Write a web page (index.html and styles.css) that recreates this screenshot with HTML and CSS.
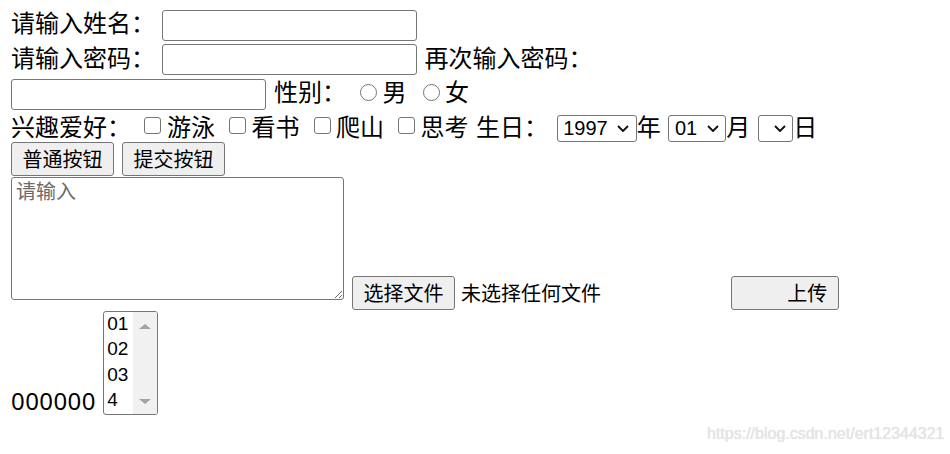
FILE: index.html
```html
<!DOCTYPE html>
<html lang="zh-CN">
<head>
<meta charset="utf-8">
<title>表单</title>
<link rel="stylesheet" href="styles.css">
</head>
<body>
<form class="form">
  <div class="row r1">
    <span class="lbl">请输入姓名：</span>
    <input class="txt ml7" type="text">
  </div>
  <div class="row r2">
    <span class="lbl">请输入密码：</span>
    <input class="txt ml7" type="password">
    <span class="lbl ml-again">再次输入密码：</span>
  </div>
  <div class="row r3">
    <input class="txt" type="password">
    <span class="lbl ml-sex">性别：</span>
    <span class="radio ml-r1"></span>
    <span class="lbl ml-opt">男</span>
    <span class="radio ml-r2"></span>
    <span class="lbl ml-opt">女</span>
  </div>
  <div class="row r4">
    <span class="lbl">兴趣爱好：</span>
    <span class="check ml-c1"></span>
    <span class="lbl ml-copt1">游泳</span>
    <span class="check ml-c"></span>
    <span class="lbl ml-copt">看书</span>
    <span class="check ml-c"></span>
    <span class="lbl ml-copt">爬山</span>
    <span class="check ml-c"></span>
    <span class="lbl ml-copt">思考</span>
    <span class="lbl ml-birth">生日：</span>
    <div class="sel sel-year ml-sel1"><span>1997</span><svg class="chev" width="12" height="7" viewBox="0 0 12 7"><path d="M1 1 L6 6 L11 1" fill="none" stroke="#111" stroke-width="1.9"/></svg></div>
    <span class="lbl">年</span>
    <div class="sel sel-month ml-sel"><span>01</span><svg class="chev" width="12" height="7" viewBox="0 0 12 7"><path d="M1 1 L6 6 L11 1" fill="none" stroke="#111" stroke-width="1.9"/></svg></div>
    <span class="lbl">月</span>
    <div class="sel sel-day ml-sel"><svg class="chev" width="12" height="7" viewBox="0 0 12 7"><path d="M1 1 L6 6 L11 1" fill="none" stroke="#111" stroke-width="1.9"/></svg></div>
    <span class="lbl">日</span>
  </div>
  <div class="row r5">
    <button class="btn w103" type="button">普通按钮</button>
    <button class="btn w103 ml8" type="submit">提交按钮</button>
  </div>
  <div class="row r6">
    <textarea class="area" placeholder="请输入"></textarea>
    <button class="btn w103 ml8 file-btn" type="button">选择文件</button>
    <span class="file-text">未选择任何文件</span>
    <button class="btn upload" type="button">上传</button>
  </div>
  <div class="row r7">
    <span class="num">000000</span>
    <div class="listbox">
      <div class="opts">
        <div class="opt">01</div>
        <div class="opt">02</div>
        <div class="opt">03</div>
        <div class="opt">4</div>
      </div>
      <div class="sb">
        <span class="tri-up"></span>
        <span class="tri-down"></span>
      </div>
    </div>
  </div>
</form>
<div class="watermark">https://blog.csdn.net/ert12344321</div>
</body>
</html>
```
FILE: styles.css
```css
html, body {
  margin: 0;
  padding: 0;
  background: #fff;
}
body {
  font-family: "Noto Sans CJK SC", sans-serif;
  font-size: 24px;
  color: #000;
  position: relative;
  width: 950px;
  height: 454px;
  overflow: hidden;
  text-spacing-trim: space-all;
}
.form {
  padding: 10px 0 0 11px;
}
.row {
  display: flex;
  align-items: flex-start;
}
.row > * {
  flex: none;
}
.lbl {
  line-height: 24px;
  white-space: nowrap;
  text-spacing-trim: space-all;
}

.txt {
  box-sizing: border-box;
  width: 255px;
  height: 31px;
  margin: 0;
  padding: 0 3px;
  border: 1px solid #767676;
  border-radius: 3px;
  background: #fff;
  font-size: 20px;
}

.radio, .check {
  display: block;
  box-sizing: border-box;
  width: 17px;
  height: 17px;
  border: 1px solid #767676;
  background: #fff;
}
.radio {
  border-radius: 50%;
  margin-top: 5px;
}
.check {
  border-radius: 3px;
  margin-top: 6.7px;
}

.r2 { margin-top: 3px; }
.r2 .lbl { margin-top: 0.5px; }
.r3 { margin-top: 4px; }
.r4 { height: 32px; }
.r4 .lbl { margin-top: 4px; }
.r6 { margin-top: 1.3px; align-items: flex-end; }
.r7 { margin-top: 0.7px; align-items: flex-end; }

.ml7 { margin-left: 7px; }
.ml8 { margin-left: 8px; }
.ml-again { margin-left: 7.5px; }
.ml-sex { margin-left: 8px; }
.ml-r1 { margin-left: 14px; }
.ml-r2 { margin-left: 16px; }
.ml-opt { margin-left: 5.5px; }
.ml-c1 { margin-left: 13px; }
.ml-c { margin-left: 14px; }
.ml-copt1 { margin-left: 6px; }
.ml-copt { margin-left: 5.5px; }
.ml-birth { margin-left: 7.5px; }
.ml-sel1 { margin-left: 8.7px; }
.ml-sel { margin-left: 7.8px; }

.sel {
  box-sizing: border-box;
  height: 26.4px;
  margin-top: 5.3px;
  display: flex;
  align-items: center;
  justify-content: space-between;
  padding: 0 6.4px 0 5.5px;
  border: 1px solid #767676;
  border-radius: 3px;
  background: #fff;
  font-family: "Liberation Sans", Arial, sans-serif;
  font-size: 20px;
  line-height: 23px;
}
.sel-year { width: 80px; }
.sel-month { width: 57.7px; }
.sel-day { width: 35.4px; justify-content: flex-end; }
.chev { display: block; flex: none; }

.btn {
  box-sizing: border-box;
  height: 34px;
  margin-top: 0;
  margin-bottom: 0;
  padding: 0 10px;
  border: 1px solid #767676;
  border-radius: 3px;
  background: #efefef;
  color: #000;
  font-family: "Noto Sans CJK SC", sans-serif;
  font-size: 20px;
  line-height: 28px;
  white-space: nowrap;
}
.w103 { width: 103px; }
.btn.ml8 { margin-left: 8px; }
.file-btn { height: 34.3px; }
.upload {
  width: 108px;
  height: 34.6px;
  margin-left: 130.3px;
  padding: 0 11px;
  text-align: right;
}
.file-text {
  margin-left: 6px;
  font-size: 20px;
  line-height: 34px;
  height: 34px;
  white-space: nowrap;
}

.area {
  box-sizing: border-box;
  width: 333px;
  height: 123px;
  margin: 0 0 10px 0;
  padding: 3px 4px;
  border: 1px solid #767676;
  border-radius: 3px;
  font-family: "Noto Sans CJK SC", sans-serif;
  font-size: 20px;
  line-height: 20px;
  background: #fff;
}
.area::placeholder {
  color: #6b6b6b;
}

.num {
  font-family: "Noto Sans", sans-serif;
  font-size: 24px;
  line-height: 24px;
  letter-spacing: 0.4px;
  margin-bottom: 2px;
}
.listbox {
  box-sizing: border-box;
  display: flex;
  width: 55px;
  height: 104px;
  margin-left: 7.5px;
  border: 1px solid #767676;
  border-radius: 3px;
  background: #fff;
  overflow: hidden;
}
.opts {
  width: 29px;
  font-family: "Liberation Sans", Arial, sans-serif;
  font-size: 19px;
}
.opt {
  height: 25.5px;
  line-height: 24px;
  padding-left: 3px;
}
.sb {
  flex: 1;
  background: #f1f1f1;
  display: flex;
  flex-direction: column;
  justify-content: space-between;
  align-items: center;
  padding: 12px 0 9.5px;
}
.tri-up {
  width: 0;
  height: 0;
  border-left: 6px solid transparent;
  border-right: 6px solid transparent;
  border-bottom: 5px solid #a3a3a3;
}
.tri-down {
  width: 0;
  height: 0;
  border-left: 6px solid transparent;
  border-right: 6px solid transparent;
  border-top: 5px solid #a3a3a3;
}

.watermark {
  position: absolute;
  left: 707px;
  top: 425px;
  font-family: "Liberation Sans", Arial, sans-serif;
  font-size: 16px;
  color: #e6e6e6;
  text-shadow: 0 0 1px #d6d6d6;
  white-space: nowrap;
}
```
